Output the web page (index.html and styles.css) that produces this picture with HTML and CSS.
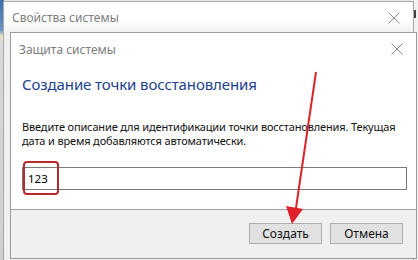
FILE: index.html
```html
<!DOCTYPE html>
<html lang="ru">
<head>
  <meta charset="UTF-8" />
  <title>Защита системы</title>
  <link rel="stylesheet" href="styles.css">
</head>
<body>
  <div class="desk">
    <div class="strip-left"></div>
    <div class="strip-right"><i></i></div>

    <div class="win outer">
      <div class="titlebar">
        <span class="title">Свойства системы</span>
        <svg class="close" width="12" height="12" viewBox="0 0 12 12">
          <path d="M0.5 0.5 L11.5 11.5 M11.5 0.5 L0.5 11.5" stroke="#8c8c8c" stroke-width="1" fill="none" />
        </svg>
      </div>
    </div>

    <div class="win inner">
      <div class="titlebar">
        <span class="title">Защита системы</span>
        <svg class="close" width="12" height="12" viewBox="0 0 12 12">
          <path d="M0.5 0.5 L11.5 11.5 M11.5 0.5 L0.5 11.5" stroke="#8c8c8c" stroke-width="1" fill="none" />
        </svg>
      </div>
      <div class="content">
        <h1>Создание точки восстановления</h1>
        <p>Введите описание для идентификации точки восстановления. Текущая дата и время добавляются автоматически.</p>
        <div class="field">
          <input type="text" value="123" />
          <span class="mark"></span>
        </div>
      </div>
      <div class="footer">
        <button class="btn">Создать</button>
        <button class="btn">Отмена</button>
      </div>
    </div>

    <!-- annotation arrow -->
    <svg class="arrow" width="418" height="260" viewBox="0 0 418 260">
      <line x1="316" y1="72" x2="296" y2="208" stroke="#d9262b" stroke-width="2" />
      <polygon points="286,206 303,209 292,224" fill="#e0202a" />
    </svg>
  </div>
</body>
</html>
```

FILE: styles.css
```css
body {
  margin: 0;
  font-family: "Noto Sans", "Open Sans", sans-serif;
}
.desk {
  position: relative;
  width: 418px;
  height: 260px;
  overflow: hidden;
  background: #e6e6e6;
}
.strip-left {
  position: absolute;
  left: 0;
  top: 0;
  width: 4px;
  height: 260px;
  background: linear-gradient(#3b6fb0 0, #6d93c4 30px, #e9e2c0 36px, #d8d8d8 44px, #cfcfcf 260px);
}
.strip-right {
  position: absolute;
  right: 0;
  top: 0;
  width: 6px;
  height: 260px;
  background: #f2f2f2;
}
.strip-right i {
  display: block;
  width: 2px;
  height: 8px;
  margin: 10px 0 0 2px;
  background: #444;
}
.win {
  position: absolute;
  display: flex;
  flex-direction: column;
  box-sizing: border-box;
  border: 1px solid #a6a6a6;
  background: #fff;
}
.outer {
  left: 3px;
  top: 1px;
  width: 411px;
  height: 262px;
  background: #f0f0f0;
}
.outer .titlebar {
  height: 31px;
  background: linear-gradient(#fff 0, #fff 18px, #f0f0f0 31px);
  padding-left: 8px;
}
.inner {
  left: 10px;
  top: 32px;
  width: 407px;
  height: 227px;
  border-color: #9a9a9a;
}
.titlebar {
  display: flex;
  align-items: center;
  justify-content: space-between;
  height: 32px;
  padding: 0 13px 0 8px;
}
.title {
  font-size: 12px;
  color: #7d7d7d;
}
.content {
  flex: 1;
  padding: 0 9px 0 11px;
}
h1 {
  margin: 8px 0 0;
  font-size: 15px;
  font-weight: normal;
  letter-spacing: -0.1px;
  line-height: 22px;
  color: #1d3f8e;
}
p {
  margin: 25px 0 0;
  font-size: 11px;
  letter-spacing: -0.15px;
  line-height: 14px;
  color: #111;
}
.field {
  position: relative;
  margin-top: 18px;
}
.field input {
  box-sizing: border-box;
  width: 385px;
  height: 23px;
  border: 1px solid #7a7a7a;
  padding: 0 5px;
  font-family: inherit;
  font-size: 11.5px;
  color: #000;
}
.mark {
  position: absolute;
  left: 1px;
  top: -5px;
  width: 32px;
  height: 30px;
  border: 2px solid #b8282d;
  border-radius: 4px;
}
.footer {
  display: flex;
  justify-content: flex-end;
  gap: 8px;
  height: 49px;
  box-sizing: border-box;
  padding: 13px 13px 0 0;
  border-top: 1px solid #a0a0a0;
  background: #f0f0f0;
}
.btn {
  width: 73px;
  height: 21px;
  border: 1px solid #adadad;
  background: #e1e1e1;
  font-family: inherit;
  font-size: 12px;
  color: #111;
  padding: 0;
}
.arrow {
  position: absolute;
  left: 0;
  top: 0;
}
```
